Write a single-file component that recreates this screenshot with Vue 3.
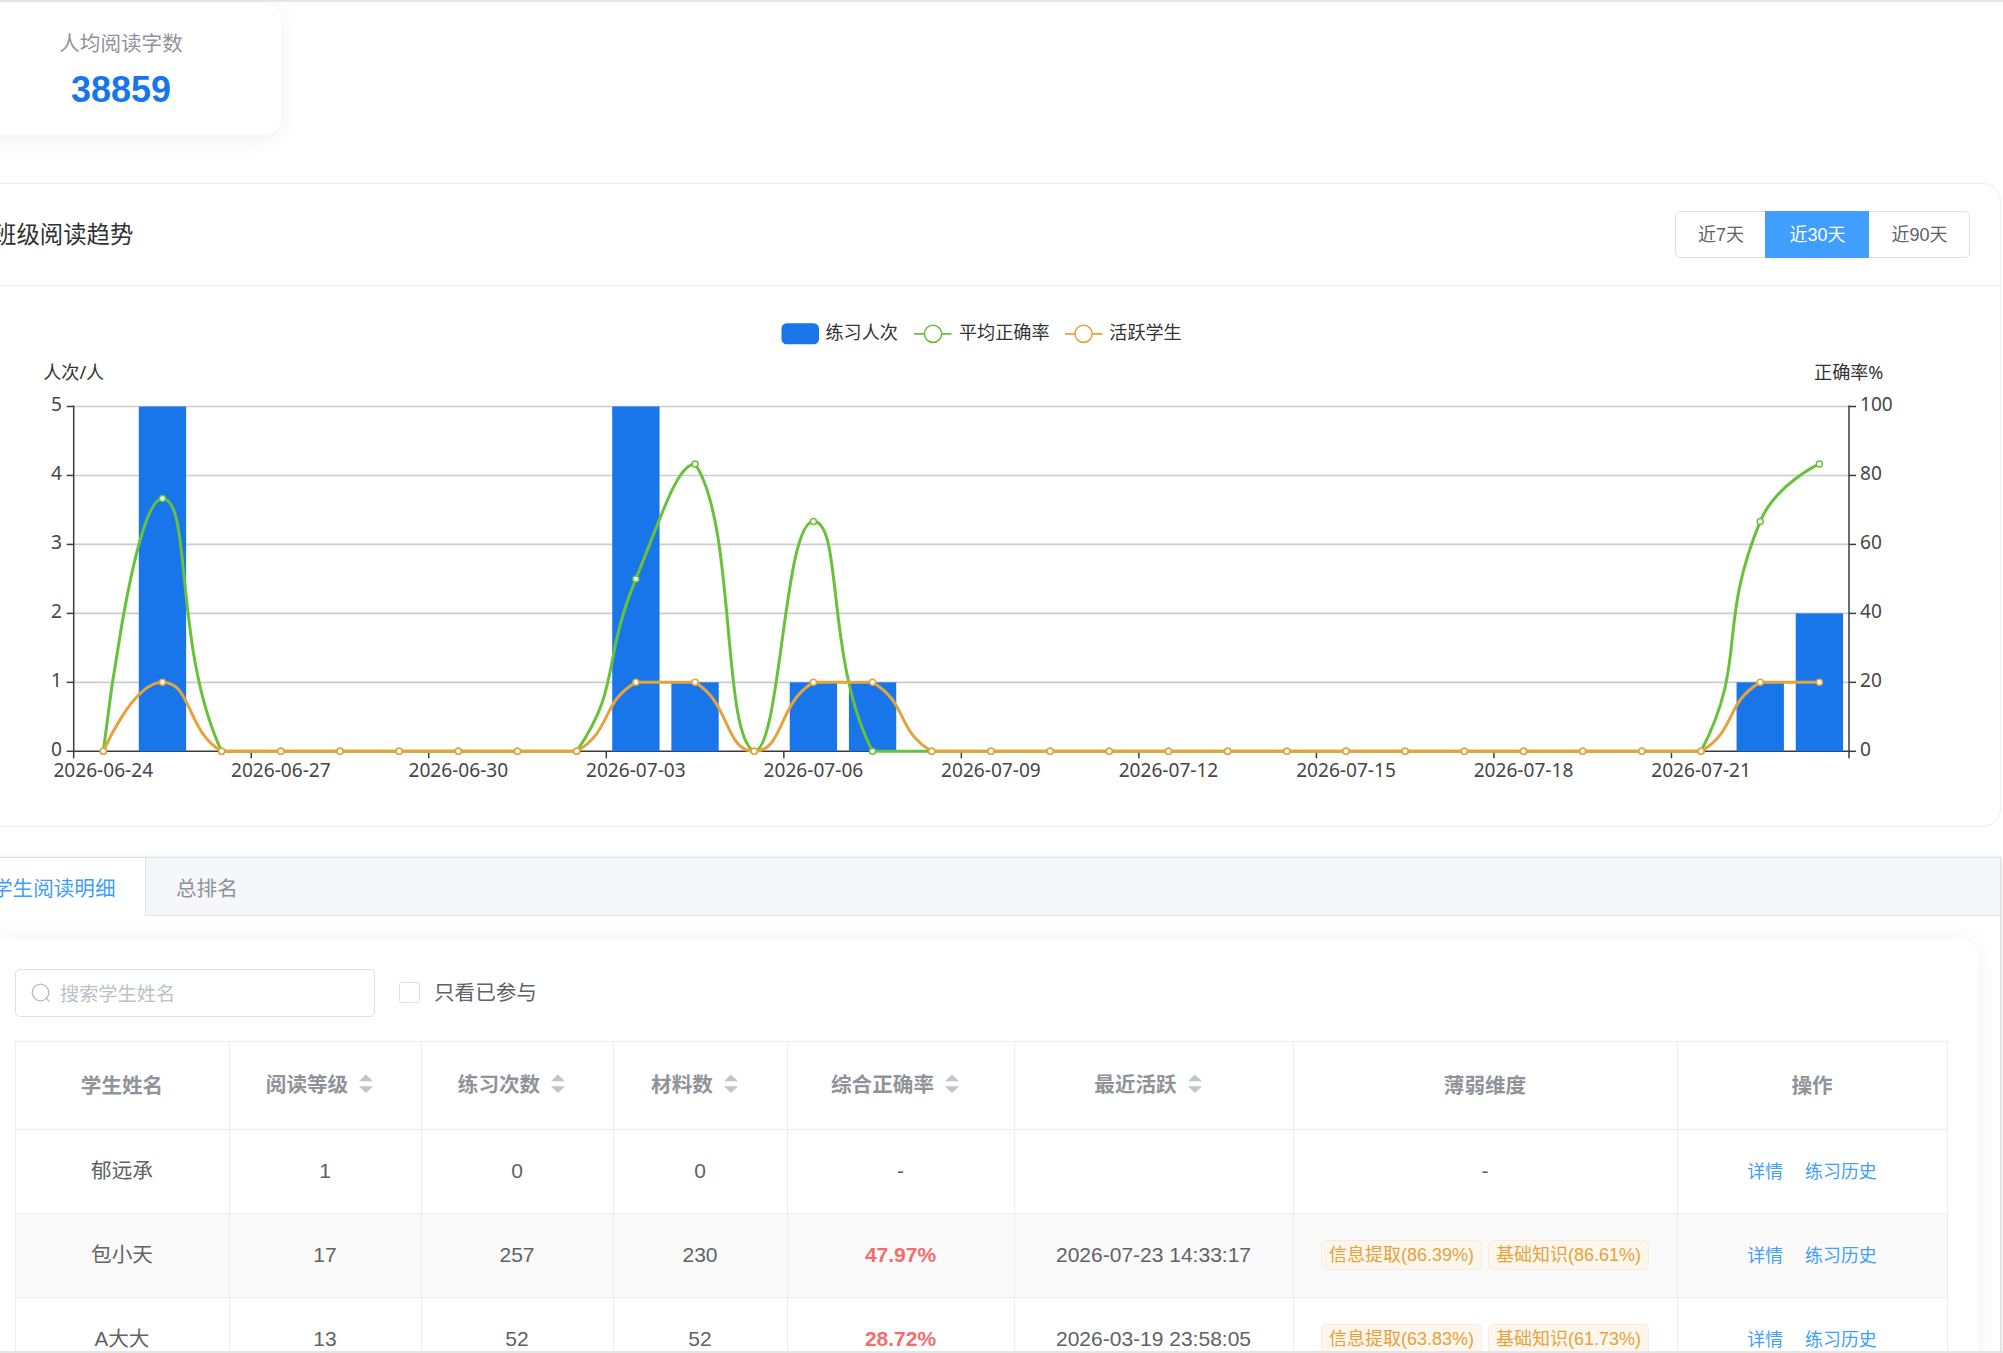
<script setup>
import { ref } from 'vue'

const ranges = ['近7天', '近30天', '近90天']
const activeRange = ref('近30天')

// Plot area of the trend chart
const left = 73.7
const right = 1849
const top = 120.5
const bottom = 465.3
const step = (right - left) / 30
const cx = (i) => left + step * (i + 0.5)
const yOf = (v, max) => bottom - ((bottom - top) * v) / max

const fill = (entries) => {
  const out = Array(30).fill(0)
  entries.forEach(([i, v]) => { out[i] = v })
  return out
}
const counts = fill([[1, 5], [9, 5], [10, 1], [12, 1], [13, 1], [28, 1], [29, 2]])
const accuracy = fill([[1, 73.33], [9, 50], [10, 83.33], [12, 66.67], [28, 66.67], [29, 83.33]])
const active = fill([[1, 1], [9, 1], [10, 1], [12, 1], [13, 1], [28, 1], [29, 1]])

const bars = counts
  .map((v, i) => ({ x: cx(i) - step * 0.4, y: yOf(v, 5), w: step * 0.8, h: bottom - yOf(v, 5), v }))
  .filter((b) => b.v > 0)
const accuracyPts = accuracy.map((v, i) => [cx(i), yOf(v, 100)])
const activePts = active.map((v, i) => [cx(i), yOf(v, 5)])

// Bezier smoothing; control points never leave the series' own value range
function smoothPath(pts, smooth = 0.5) {
  const ys = pts.map((p) => p[1])
  const minY = Math.min(...ys)
  const maxY = Math.max(...ys)
  const clampY = (y) => Math.max(minY, Math.min(maxY, y))
  let d = `M${pts[0][0]} ${pts[0][1]}`
  let [c0x, c0y] = pts[0]
  for (let i = 1; i < pts.length; i++) {
    const [px, py] = pts[i - 1]
    const [x, y] = pts[i]
    let c1x = x
    let c1y = y
    let n0x = x
    let n0y = y
    if (i < pts.length - 1) {
      const [nx, ny] = pts[i + 1]
      const lp = Math.hypot(x - px, y - py)
      const ln = Math.hypot(nx - x, ny - y)
      const ratio = ln / (ln + lp)
      c1x = x - (nx - px) * smooth * (1 - ratio)
      c1y = clampY(y - (ny - py) * smooth * (1 - ratio))
      n0x = x + (nx - px) * smooth * ratio
      n0y = clampY(y + (ny - py) * smooth * ratio)
    }
    d += `C${c0x} ${c0y} ${c1x} ${c1y} ${x} ${y}`
    c0x = n0x
    c0y = n0y
  }
  return d
}

const accuracyPath = smoothPath(accuracyPts)
const activePath = smoothPath(activePts)

const dates = ['2026-06-24', '2026-06-27', '2026-06-30', '2026-07-03', '2026-07-06',
  '2026-07-09', '2026-07-12', '2026-07-15', '2026-07-18', '2026-07-21']

const columns = [
  { label: '学生姓名', width: 214 },
  { label: '阅读等级', width: 192, sort: true },
  { label: '练习次数', width: 192, sort: true },
  { label: '材料数', width: 174, sort: true },
  { label: '综合正确率', width: 227, sort: true },
  { label: '最近活跃', width: 279, sort: true },
  { label: '薄弱维度', width: 384 },
  { label: '操作', width: 270 },
]
const rows = [
  { name: '郁远承', level: 1, times: 0, materials: 0, rate: '', last: '', weak: [] },
  { name: '包小天', level: 17, times: 257, materials: 230, rate: '47.97%', last: '2026-07-23 14:33:17', weak: ['信息提取(86.39%)', '基础知识(86.61%)'] },
  { name: 'A大大', level: 13, times: 52, materials: 52, rate: '28.72%', last: '2026-03-19 23:58:05', weak: ['信息提取(63.83%)', '基础知识(61.73%)'] },
]
</script>

<template>
  <div class="page">
    <section class="stat">
      <div class="stat-label">人均阅读字数</div>
      <div class="stat-value">38859</div>
    </section>

    <section class="panel">
      <header class="panel-head">
        <h2>班级阅读趋势</h2>
        <div class="range">
          <button v-for="r in ranges" :key="r" :class="{ on: r === activeRange }" @click="activeRange = r">{{ r }}</button>
        </div>
      </header>
      <svg class="chart" width="2000" height="540" viewBox="0 0 2000 540">
        <rect x="781.5" y="37.3" width="37.5" height="21" rx="5.2" fill="#1876ea" />
        <text class="cjk" x="825.5" y="52.7">练习人次</text>
        <g fill="#fff" stroke="#67c23a">
          <path d="M914 47.8H951.5" stroke-width="1.8" />
          <circle cx="933" cy="47.8" r="8.6" stroke-width="1.6" />
        </g>
        <text class="cjk" x="959" y="52.7">平均正确率</text>
        <g fill="#fff" stroke="#e6a23c">
          <path d="M1065 47.8H1102.5" stroke-width="1.8" />
          <circle cx="1083.6" cy="47.8" r="8.6" stroke-width="1.6" />
        </g>
        <text class="cjk" x="1109.3" y="52.7">活跃学生</text>

        <text class="cjk" x="73.7" y="93" text-anchor="middle">人次/人</text>
        <text class="cjk" x="1848.7" y="92.5" text-anchor="middle">正确率%</text>

        <path v-for="k in 5" :key="'g' + k" :d="`M${left} ${yOf(k, 5)}H${right}`" stroke="#ccc" stroke-width="1.6" />
        <g stroke="#3c3c3c" stroke-width="1.5">
          <path :d="`M${left} ${bottom}H${right}`" />
          <path :d="`M${left} ${top - 1}V${bottom + 7}`" />
          <path :d="`M${right} ${top - 1}V${bottom + 7}`" />
          <path v-for="k in 9" :key="'x' + k" :d="`M${left + step * 3 * k} ${bottom}v7`" />
          <path v-for="k in 6" :key="'l' + k" :d="`M${left} ${yOf(k - 1, 5)}h-7`" />
          <path v-for="k in 6" :key="'r' + k" :d="`M${right} ${yOf(k - 1, 5)}h7`" />
        </g>
        <text v-for="k in 6" :key="'lt' + k" class="num" x="62" :y="yOf(k - 1, 5) + 4.7" text-anchor="end">{{ k - 1 }}</text>
        <text v-for="k in 6" :key="'rt' + k" class="num" x="1860" :y="yOf(k - 1, 5) + 4.7">{{ (k - 1) * 20 }}</text>
        <text v-for="(d, i) in dates" :key="d" class="num" :x="cx(i * 3)" y="490.7" text-anchor="middle">{{ d }}</text>

        <rect v-for="b in bars" :key="b.x" :x="b.x" :y="b.y" :width="b.w" :height="b.h" fill="#1876ea" />
        <path :d="accuracyPath" class="line" stroke="#67c23a" />
        <circle v-for="(p, i) in accuracyPts" :key="'a' + i" :cx="p[0]" :cy="p[1]" r="3" fill="#fff" stroke="#67c23a" stroke-width="1.5" />
        <path :d="activePath" class="line" stroke="#e6a23c" />
        <circle v-for="(p, i) in activePts" :key="'s' + i" :cx="p[0]" :cy="p[1]" r="3" fill="#fff" stroke="#e6a23c" stroke-width="1.5" />
      </svg>
    </section>

    <section class="tabs">
      <nav class="tab-bar">
        <a class="tab current">学生阅读明细</a>
        <a class="tab">总排名</a>
      </nav>
      <div class="detail">
        <div class="filters">
          <label class="search">
            <svg width="21" height="21" viewBox="0 0 21 21" fill="none" stroke="#b4b8c1" stroke-width="1.3" stroke-linecap="round">
              <circle cx="10.5" cy="9.5" r="8.3" />
              <path d="M16.4 15.4l2.6 2.6" />
            </svg>
            <span>搜索学生姓名</span>
          </label>
          <label class="check"><i></i><span>只看已参与</span></label>
        </div>
        <table>
          <colgroup><col v-for="c in columns" :key="c.label" :style="{ width: c.width + 'px' }"></colgroup>
          <thead>
            <tr>
              <th v-for="c in columns" :key="c.label">
                <div class="th" :class="{ sortable: c.sort }">
                  <span>{{ c.label }}</span>
                  <svg v-if="c.sort" width="36" height="20" viewBox="0 0 36 20" fill="#c0c4cc"><path d="M11 7.2L18 .5l7 6.7zM11 12.2h14L18 19z" /></svg>
                </div>
              </th>
            </tr>
          </thead>
          <tbody>
            <tr v-for="r in rows" :key="r.name">
              <td class="name">{{ r.name }}</td>
              <td>{{ r.level }}</td>
              <td>{{ r.times }}</td>
              <td>{{ r.materials }}</td>
              <td><b v-if="r.rate">{{ r.rate }}</b><template v-else>-</template></td>
              <td>{{ r.last }}</td>
              <td>
                <div v-if="r.weak.length" class="tags"><span v-for="w in r.weak" :key="w">{{ w }}</span></div>
                <template v-else>-</template>
              </td>
              <td><div class="links"><a>详情</a><a>练习历史</a></div></td>
            </tr>
          </tbody>
        </table>
      </div>
    </section>
  </div>
</template>

<style>
body {
  margin: 0;
  overflow: hidden;
}
</style>

<style scoped>
.page {
  box-sizing: border-box;
  width: 2003px;
  height: 1353px;
  overflow: hidden;
  border-top: 2px solid #e5e5e5;
  border-bottom: 2px solid #e5e5e5;
  background: #fff;
  color: #606266;
  font-family: "Liberation Sans", "Noto Sans CJK SC", sans-serif;
  font-size: 20.6px;
}
.stat {
  box-sizing: border-box;
  width: 318px;
  height: 132px;
  margin: 1px 0 0 -37px;
  padding: 25px 2px 0 0;
  border-radius: 18px;
  box-shadow: 0 5px 23px rgba(0, 0, 0, .06);
  text-align: center;
}
.stat-label {
  color: #909399;
  line-height: 32px;
}
.stat-value {
  margin-top: 9px;
  color: #1876ea;
  font-size: 36px;
  font-weight: 700;
  line-height: 42px;
}
.panel {
  box-sizing: border-box;
  width: 2025px;
  height: 644px;
  margin: 48px 0 0 -24px;
  border: 1px solid #ebeef5;
  border-radius: 18px;
}
.panel-head {
  box-sizing: border-box;
  display: flex;
  align-items: center;
  justify-content: space-between;
  height: 102px;
  padding: 0 30px 0 16px;
  border-bottom: 1px solid #ebeef5;
}
h2 {
  margin: 0;
  padding-top: 1px;
  color: #303133;
  font-size: 23.4px;
  font-weight: 400;
  line-height: 34px;
}
.range {
  display: flex;
}
button {
  box-sizing: border-box;
  width: 91px;
  height: 47px;
  padding: 0 0 3px 1px;
  border: 1px solid #dcdfe6;
  border-radius: 5px 0 0 5px;
  background: #fff;
  color: #606266;
  font: inherit;
  font-size: 18px;
}
button.on {
  width: 104px;
  margin-left: -1px;
  border-color: #409eff;
  border-radius: 0;
  background: #409eff;
  color: #fff;
}
button:last-child {
  width: 101px;
  border-left: 0;
  border-radius: 0 5px 5px 0;
}
.chart {
  display: block;
  margin-left: 23px;
}
.cjk {
  fill: #333;
  font-family: "Noto Sans", "Noto Sans CJK SC", sans-serif;
  font-size: 18.1px;
}
.num {
  fill: #464646;
  font-family: "Noto Sans", sans-serif;
  font-size: 19.1px;
}
.line {
  fill: none;
  stroke-width: 3;
  stroke-linejoin: bevel;
}
.tabs {
  width: 2024px;
  height: 560px;
  margin: 30px 0 0 -25px;
  border: 1px solid #dcdfe6;
  box-shadow: 0 3px 6px rgba(0, 0, 0, .12), 0 0 9px rgba(0, 0, 0, .04);
}
.tab-bar {
  display: flex;
  height: 57px;
  border-bottom: 1px solid #dfe4ed;
  background: #f5f7fa;
}
.tab {
  padding: 0 30px;
  color: #909399;
  line-height: 61px;
}
.tab.current {
  box-sizing: border-box;
  width: 170px;
  height: 58px;
  padding: 0 0 0 16px;
  border-right: 1px solid #dcdfe6;
  background: #fff;
  color: #409eff;
  white-space: nowrap;
}
.detail {
  box-sizing: border-box;
  width: 1993px;
  height: 520px;
  margin: 23px 0 0 9px;
  padding: 30px;
  border-radius: 18px;
  box-shadow: 0 0 23px rgba(0, 0, 0, .06);
}
.filters {
  display: flex;
  align-items: center;
  gap: 24px;
}
.search {
  box-sizing: border-box;
  display: flex;
  align-items: center;
  gap: 9px;
  width: 360px;
  height: 48px;
  padding-left: 14px;
  border: 1px solid #dcdfe6;
  border-radius: 5px;
  color: #bbbfc8;
  font-size: 19.2px;
}
.check {
  display: flex;
  align-items: center;
  gap: 14px;
  padding-bottom: 2px;
}
.check span {
  margin-top: -2px;
}
.check i {
  box-sizing: border-box;
  width: 21px;
  height: 21px;
  border: 1px solid #dcdfe6;
  border-radius: 3px;
}
table {
  width: 1933px;
  margin-top: 24px;
  border-collapse: separate;
  border-spacing: 0;
  border-top: 1px solid #ebeef5;
  border-left: 1px solid #ebeef5;
  table-layout: fixed;
}
th,
td {
  box-sizing: border-box;
  padding: 0;
  border-right: 1px solid #ebeef5;
  border-bottom: 1px solid #ebeef5;
  text-align: center;
}
th {
  height: 88px;
  color: #909399;
  font-weight: 700;
}
.th {
  display: flex;
  align-items: center;
  justify-content: center;
  padding-right: 1px;
}
.th span {
  margin-top: -4px;
}
.th.sortable {
  margin-top: -3px;
}
.sortable span {
  margin-top: -2px;
}
td {
  height: 84px;
  padding: 0 1px 2px 0;
  font-size: 21px;
  line-height: 32px;
}
td.name {
  font-size: 20.6px;
}
tbody tr:nth-child(2) td {
  background: #fafafa;
}
b {
  color: #f56c6c;
}
.tags {
  display: flex;
  justify-content: center;
  gap: 6px;
}
.tags span {
  box-sizing: border-box;
  width: 161px;
  height: 30px;
  border: 1px solid #faecd8;
  border-radius: 5px;
  background: #fdf6ec;
  color: #e6a23c;
  font-size: 18px;
  line-height: 28px;
}
.links {
  display: flex;
  justify-content: center;
  gap: 22px;
  padding-top: 3px;
  color: #409eff;
  font-size: 17.9px;
}
</style>
